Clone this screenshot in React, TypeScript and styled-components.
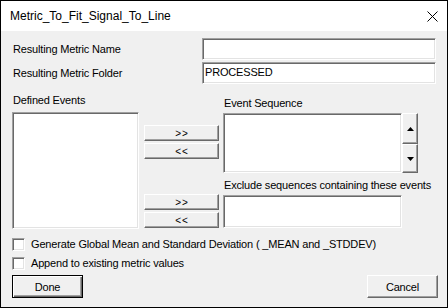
import styled, { createGlobalStyle, css } from 'styled-components';

const GlobalStyle = createGlobalStyle`
  html, body {
    margin: 0;
    padding: 0;
    background: #f0f0f0;
  }
  * {
    box-sizing: border-box;
  }
`;

const sunken = css`
  background: #fff;
  border: 1px solid;
  border-color: #a0a0a0 #fff #fff #a0a0a0;
  box-shadow: inset 1px 1px 0 #696969, inset -1px -1px 0 #e3e3e3;
`;

const raised = css`
  background: #f0f0f0;
  border: 1px solid;
  border-color: #fff #696969 #696969 #fff;
  box-shadow: inset -1px -1px 0 #a0a0a0;
`;

const Window = styled.div`
  width: 448px;
  height: 308px;
  border: 1px solid #000;
  display: flex;
  flex-direction: column;
  font-family: 'Liberation Sans', Arial, sans-serif;
  font-size: 11px;
  letter-spacing: -0.17px;
  color: #000;
`;

const TitleBar = styled.div`
  height: 30px;
  background: #fff;
  display: flex;
  align-items: center;
  justify-content: space-between;
  padding: 0 9px 0 9px;
  font-family: 'Liberation Sans', Arial, sans-serif;
  font-size: 12px;
  letter-spacing: 0;
`;

const Body = styled.div`
  flex: 1;
  background: #f0f0f0;
  padding: 7px 9px 0 11px;
  display: flex;
  flex-direction: column;
`;

const FormGrid = styled.div`
  display: grid;
  grid-template-columns: 190px 234px;
  row-gap: 2px;
`;

const Label = styled.div<{ $top?: number }>`
  line-height: 13px;
  white-space: nowrap;
  margin-top: ${(p) => p.$top ?? 0}px;
  padding-left: 1px;
`;

const FieldLabel = styled(Label)`
  align-self: center;
`;

const TextBox = styled.div`
  ${sunken};
  height: 22px;
  padding: 3px 2px 0;
  line-height: 13px;
`;

const Main = styled.div`
  display: flex;
`;

const Column = styled.div<{ $width: number; $left?: number; $pad?: number }>`
  width: ${(p) => p.$width}px;
  margin-left: ${(p) => p.$left ?? 0}px;
  padding-top: ${(p) => p.$pad ?? 0}px;
  display: flex;
  flex-direction: column;
`;

const ListBox = styled.div<{ $w: number; $h: number; $top?: number }>`
  ${sunken};
  width: ${(p) => p.$w}px;
  height: ${(p) => p.$h}px;
  margin-top: ${(p) => p.$top ?? 0}px;
`;

const ButtonPair = styled.div<{ $top?: number }>`
  display: flex;
  flex-direction: column;
  gap: 2px;
  margin-top: ${(p) => p.$top ?? 0}px;
`;

const MoveButton = styled.div`
  ${raised};
  height: 16px;
  display: flex;
  align-items: center;
  justify-content: center;
  font-size: 10px;
  letter-spacing: 1px;
  padding-left: 1px;
`;

const ListRow = styled.div`
  display: flex;
  margin-top: 3px;
`;

const ScrollCol = styled.div`
  display: flex;
  flex-direction: column;
  width: 16px;
`;

const ScrollButton = styled.div<{ $h: number }>`
  ${raised};
  height: ${(p) => p.$h}px;
  display: flex;
  align-items: center;
  justify-content: center;
`;

const CheckRow = styled.div<{ $top: number }>`
  display: flex;
  align-items: center;
  gap: 6px;
  margin-top: ${(p) => p.$top}px;
  height: 13px;
  line-height: 13px;
  white-space: nowrap;
`;

const CheckBox = styled.div`
  ${sunken};
  width: 13px;
  height: 13px;
  flex: none;
`;

const Footer = styled.div`
  display: flex;
  justify-content: space-between;
  margin-top: 5px;
`;

const DialogButton = styled.div<{ $default?: boolean }>`
  width: 71px;
  height: 23px;
  display: flex;
  align-items: center;
  justify-content: center;
  font-size: 11px;
  background: #f0f0f0;
  ${(p) =>
    p.$default
      ? css`
          border: 1px solid #000;
          box-shadow: inset 1px 1px 0 #fff, inset -1px -1px 0 #696969,
            inset -2px -2px 0 #a0a0a0;
        `
      : raised}
`;

const CloseIcon = () => (
  <svg width="11" height="11" viewBox="0 0 11 11">
    <path d="M0.5 0.5 L10.5 10.5 M10.5 0.5 L0.5 10.5" stroke="#000" strokeWidth="1" fill="none" />
  </svg>
);

const Arrow = ({ up }: { up?: boolean }) => (
  <svg width="7" height="4" viewBox="0 0 7 4">
    <polygon points={up ? '3.5,0 7,4 0,4' : '0,0 7,0 3.5,4'} fill="#000" />
  </svg>
);

const App = () => (
  <>
    <GlobalStyle />
    <Window>
      <TitleBar>
        <span>Metric_To_Fit_Signal_To_Line</span>
        <CloseIcon />
      </TitleBar>
      <Body>
        <FormGrid>
          <FieldLabel>Resulting Metric Name</FieldLabel>
          <TextBox />
          <FieldLabel>Resulting Metric Folder</FieldLabel>
          <TextBox>PROCESSED</TextBox>
        </FormGrid>

        <Main>
          <Column $width={127}>
            <Label $top={10}>Defined Events</Label>
            <ListBox $w={127} $h={117} $top={5} />
          </Column>

          <Column $width={75} $left={5} $pad={41}>
            <ButtonPair>
              <MoveButton>&gt;&gt;</MoveButton>
              <MoveButton>&lt;&lt;</MoveButton>
            </ButtonPair>
            <ButtonPair $top={35}>
              <MoveButton>&gt;&gt;</MoveButton>
              <MoveButton>&lt;&lt;</MoveButton>
            </ButtonPair>
          </Column>

          <Column $width={195} $left={4}>
            <Label $top={13}>Event Sequence</Label>
            <ListRow>
              <ListBox $w={179} $h={60} />
              <ScrollCol>
                <ScrollButton $h={31}>
                  <Arrow up />
                </ScrollButton>
                <ScrollButton $h={29}>
                  <Arrow />
                </ScrollButton>
              </ScrollCol>
            </ListRow>
            <Label $top={6}>Exclude sequences containing these events</Label>
            <ListBox $w={179} $h={33} $top={3} />
          </Column>
        </Main>

        <CheckRow $top={9}>
          <CheckBox />
          <span>Generate Global Mean and Standard Deviation ( _MEAN and _STDDEV)</span>
        </CheckRow>
        <CheckRow $top={6}>
          <CheckBox />
          <span>Append to existing metric values</span>
        </CheckRow>

        <Footer>
          <DialogButton $default>Done</DialogButton>
          <DialogButton>Cancel</DialogButton>
        </Footer>
      </Body>
    </Window>
  </>
);

export default App;
